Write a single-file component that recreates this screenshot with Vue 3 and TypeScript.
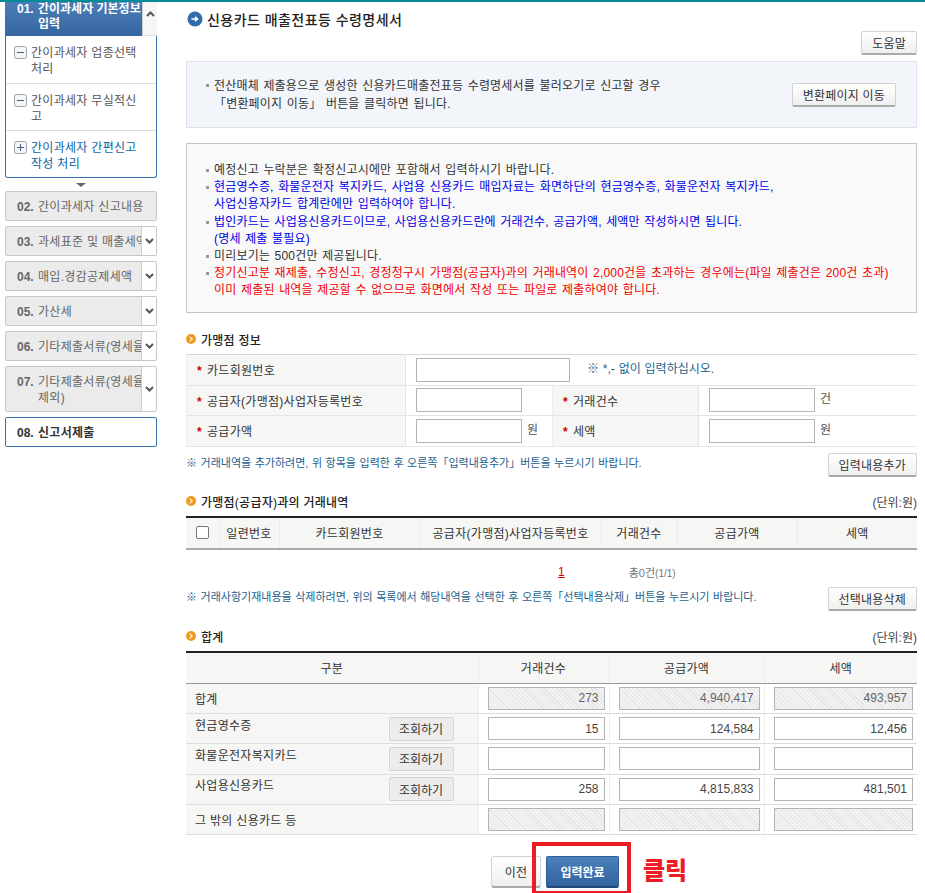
<script setup lang="ts">
interface Step {
  no: string
  lines: string[]
  caret: boolean
  tall?: boolean
}

interface SubItem {
  lines: string[]
  icon: 'minus' | 'plus'
  active?: boolean
}

interface TotalRow {
  label: string
  lookup: boolean
  locked: boolean
  values: string[]
}

const subItems: SubItem[] = [
  { lines: ['간이과세자 업종선택', '처리'], icon: 'minus' },
  { lines: ['간이과세자 무실적신', '고'], icon: 'minus' },
  { lines: ['간이과세자 간편신고', '작성 처리'], icon: 'plus', active: true },
]

const steps: Step[] = [
  { no: '02.', lines: ['간이과세자 신고내용'], caret: false },
  { no: '03.', lines: ['과세표준 및 매출세액'], caret: true },
  { no: '04.', lines: ['매입.경감공제세액'], caret: true },
  { no: '05.', lines: ['가산세'], caret: true },
  { no: '06.', lines: ['기타제출서류(영세율'], caret: true },
  { no: '07.', lines: ['기타제출서류(영세율', '제외)'], caret: true, tall: true },
]

const historyCols = ['일련번호', '카드회원번호', '공급자(가맹점)사업자등록번호', '거래건수', '공급가액', '세액']

const totalRows: TotalRow[] = [
  { label: '합계', lookup: false, locked: true, values: ['273', '4,940,417', '493,957'] },
  { label: '현금영수증', lookup: true, locked: false, values: ['15', '124,584', '12,456'] },
  { label: '화물운전자복지카드', lookup: true, locked: false, values: ['', '', ''] },
  { label: '사업용신용카드', lookup: true, locked: false, values: ['258', '4,815,833', '481,501'] },
  { label: '그 밖의 신용카드 등', lookup: false, locked: true, values: ['', '', ''] },
]
</script>

<template>
  <div class="page">
    <aside class="sidebar">
      <div class="step-open">
        <div class="step-open-head">
          <span class="step-no">01.</span>
          <span class="step-text">간이과세자 기본정보<br />입력</span>
          <span class="caret-btn up">
            <svg width="9" height="6" viewBox="0 0 9 6"><path d="M1 5l3.5-3.5L8 5" fill="none" stroke="#555" stroke-width="2" /></svg>
          </span>
        </div>
        <ul class="sub-list">
          <li v-for="item in subItems" :key="item.lines[0]" class="sub-item" :class="{ active: item.active }">
            <svg class="sub-icon" width="13" height="13" viewBox="0 0 13 13">
              <rect x="0.5" y="0.5" width="12" height="12" rx="2" fill="#f4f6f8" stroke="#9aa3ad" />
              <path d="M3 6.5h7" stroke="#44607c" stroke-width="1" />
              <path v-if="item.icon === 'plus'" d="M6.5 3v7" stroke="#44607c" stroke-width="1" />
            </svg>
            <span>{{ item.lines[0] }}<br />{{ item.lines[1] }}</span>
          </li>
        </ul>
      </div>
      <div class="down-arrow"></div>
      <div class="step-list">
        <div v-for="step in steps" :key="step.no" class="step" :class="{ tall: step.tall }">
          <div class="step-body">
            <span class="step-no">{{ step.no }}</span>
            <span class="step-text">
              <template v-for="(line, i) in step.lines" :key="i"><br v-if="i > 0" />{{ line }}</template>
            </span>
          </div>
          <span v-if="step.caret" class="caret-btn">
            <svg width="9" height="6" viewBox="0 0 9 6"><path d="M1 1l3.5 3.5L8 1" fill="none" stroke="#555" stroke-width="2" /></svg>
          </span>
        </div>
        <div class="step current">
          <div class="step-body">
            <span class="step-no">08.</span>
            <span class="step-text">신고서제출</span>
          </div>
        </div>
      </div>
    </aside>

    <main class="content">
      <h1 class="page-title">
        <svg width="16" height="16" viewBox="0 0 16 16">
          <circle cx="8" cy="8" r="7.5" fill="#2f6ea8" />
          <path d="M4.5 8h5M8 5.8L10.5 8 8 10.2" fill="none" stroke="#fff" stroke-width="1.6" />
        </svg>
        신용카드 매출전표등 수령명세서
      </h1>

      <div class="help-row"><button class="btn">도움말</button></div>

      <section class="convert-box">
        <p class="bullet">
          전산매체 제출용으로 생성한 신용카드매출전표등 수령명세서를 불러오기로 신고할 경우<br />
          「변환페이지 이동」 버튼을 클릭하면 됩니다.
        </p>
        <button class="btn">변환페이지 이동</button>
      </section>

      <section class="notice-box">
        <p class="bullet">예정신고 누락분은 확정신고시에만 포함해서 입력하시기 바랍니다.</p>
        <p class="bullet blue">
          현금영수증, 화물운전자 복지카드, 사업용 신용카드 매입자료는 화면하단의 현금영수증, 화물운전자 복지카드,<br />
          사업신용자카드 합계란에만 입력하여야 합니다.
        </p>
        <p class="bullet blue">
          법인카드는 사업용신용카드이므로, 사업용신용카드란에 거래건수, 공급가액, 세액만 작성하시면 됩니다.<br />
          (명세 제출 불필요)
        </p>
        <p class="bullet">미리보기는 500건만 제공됩니다.</p>
        <p class="bullet red">
          정기신고분 재제출, 수정신고, 경정청구시 가맹점(공급자)과의 거래내역이 2,000건을 초과하는 경우에는(파일 제출건은 200건 초과)<br />
          이미 제출된 내역을 제공할 수 없으므로 화면에서 작성 또는 파일로 제출하여야 합니다.
        </p>
      </section>

      <h2 class="section-title first">
        <span class="dot"></span>가맹점 정보
      </h2>
      <table class="form-table">
        <colgroup>
          <col style="width: 219px" /><col style="width: 147px" /><col style="width: 146px" /><col />
        </colgroup>
        <tbody>
          <tr>
            <th><i>*</i>카드회원번호</th>
            <td colspan="3">
              <input class="field card" type="text" />
              <span class="hint inline">※ *,- 없이 입력하십시오.</span>
            </td>
          </tr>
          <tr>
            <th><i>*</i>공급자(가맹점)사업자등록번호</th>
            <td><input class="field short" type="text" /></td>
            <th><i>*</i>거래건수</th>
            <td><input class="field short" type="text" /><span class="unit">건</span></td>
          </tr>
          <tr>
            <th><i>*</i>공급가액</th>
            <td><input class="field short" type="text" /><span class="unit">원</span></td>
            <th><i>*</i>세액</th>
            <td><input class="field short" type="text" /><span class="unit">원</span></td>
          </tr>
        </tbody>
      </table>
      <div class="note-row add">
        <span class="hint">※ 거래내역을 추가하려면, 위 항목을 입력한 후 오른쪽「입력내용추가」버튼을 누르시기 바랍니다.</span>
        <button class="btn">입력내용추가</button>
      </div>

      <div class="section-row history">
        <h2 class="section-title"><span class="dot"></span>가맹점(공급자)과의 거래내역</h2>
        <span class="unit-label">(단위:원)</span>
      </div>
      <table class="history-table">
        <colgroup>
          <col style="width: 33px" /><col style="width: 60px" /><col style="width: 141px" />
          <col style="width: 181px" /><col style="width: 76px" /><col style="width: 120px" /><col />
        </colgroup>
        <thead>
          <tr>
            <th><input class="check" type="checkbox" /></th>
            <th v-for="col in historyCols" :key="col">{{ col }}</th>
          </tr>
        </thead>
      </table>
      <div class="pager">
        <a class="page-link">1</a>
        <span class="page-total">총0건<small>(1/1)</small></span>
      </div>
      <div class="note-row remove">
        <span class="hint">※ 거래사항기재내용을 삭제하려면, 위의 목록에서 해당내역을 선택한 후 오른쪽「선택내용삭제」버튼을 누르시기 바랍니다.</span>
        <button class="btn">선택내용삭제</button>
      </div>

      <div class="section-row total">
        <h2 class="section-title"><span class="dot"></span>합계</h2>
        <span class="unit-label">(단위:원)</span>
      </div>
      <table class="total-table">
        <colgroup>
          <col style="width: 292px" /><col style="width: 131px" /><col style="width: 155px" /><col />
        </colgroup>
        <thead>
          <tr>
            <th>구분</th>
            <th>거래건수</th>
            <th>공급가액</th>
            <th>세액</th>
          </tr>
        </thead>
        <tbody>
          <tr v-for="row in totalRows" :key="row.label">
            <th>
              <div class="total-label" :class="{ top: row.lookup }">
                <span>{{ row.label }}</span>
                <button v-if="row.lookup" class="lookup">조회하기</button>
              </div>
            </th>
            <td v-for="(val, i) in row.values" :key="i">
              <input class="field amount" :class="{ locked: row.locked }" type="text" :value="val" :readonly="row.locked" />
            </td>
          </tr>
        </tbody>
      </table>

      <div class="actions">
        <button class="btn prev">이전</button>
        <div class="submit-wrap">
          <button class="submit">입력완료</button>
          <span class="red-frame"></span>
          <span class="click-label">클릭</span>
        </div>
      </div>
    </main>
  </div>
</template>

<style scoped>
.page {
  display: flex;
  width: 925px;
  height: 893px;
  overflow: hidden;
  border-top: 2px solid #008c95;
  box-sizing: border-box;
  font-family: "Liberation Sans", "Noto Sans CJK KR", sans-serif;
  font-size: 12px;
  color: #333;
  background: #fff;
}

button,
input {
  font-family: inherit;
}

.sidebar {
  width: 152px;
  margin-left: 5px;
  flex: none;
}

.step-open-head {
  position: relative;
  display: flex;
  height: 34px;
  padding: 0 0 0 12px;
  background: linear-gradient(#4a7db8, #36669f);
  color: #fff;
  font-weight: 700;
  font-size: 12px;
  line-height: 15px;
  overflow: hidden;
}

.step-open-head .step-no {
  width: 21px;
  flex: none;
}

.step-open-head .step-text {
  white-space: nowrap;
}

.caret-btn {
  position: absolute;
  top: 0;
  right: 0;
  bottom: 0;
  width: 14px;
  display: flex;
  align-items: center;
  justify-content: center;
  background: #fff;
  border-left: 1px solid #ccc;
}

.caret-btn.up {
  background: #f6f6f6;
  align-items: flex-start;
  padding-top: 9px;
  border-bottom: 1px solid #ddd;
  box-sizing: border-box;
  width: 15px;
}

.sub-list {
  list-style: none;
  margin: 0;
  padding: 0;
  border: 1px solid #3a72b0;
  border-top: 0;
  border-radius: 0 0 3px 3px;
  height: 142px;
  box-sizing: border-box;
}

.sub-item {
  display: flex;
  gap: 4px;
  height: 47.5px;
  box-sizing: border-box;
  padding: 9px 2px 0 8px;
  line-height: 16px;
  color: #555;
  font-size: 12px;
  letter-spacing: 0.3px;
  border-bottom: 1px solid #ddd;
}

.sub-item:last-child {
  border-bottom: 0;
}

.sub-item.active {
  color: #0b62a4;
}

.sub-icon {
  flex: none;
  margin-top: 1px;
}

.down-arrow {
  width: 0;
  height: 0;
  margin: 5px auto 4px;
  border-left: 5px solid transparent;
  border-right: 5px solid transparent;
  border-top: 4px solid #666;
}

.step-list {
  display: flex;
  flex-direction: column;
  gap: 5px;
}

.step {
  position: relative;
  height: 30px;
  box-sizing: border-box;
  background: #ebebeb;
  border: 1px solid #c8c8c8;
  border-radius: 2px;
  overflow: hidden;
}

.step.tall {
  height: 46px;
}

.step-body {
  display: flex;
  padding: 7px 0 0 11px;
  line-height: 16px;
  font-size: 12px;
  letter-spacing: 0.3px;
  color: #666;
  white-space: nowrap;
}

.step-no {
  width: 21px;
  flex: none;
  font-weight: 700;
  letter-spacing: 0;
}

.step.current {
  background: #fff;
  border-color: #3a72b0;
}

.step.current .step-body {
  color: #333;
  font-weight: 700;
}

.content {
  width: 731px;
  margin-left: 29px;
  flex: none;
}

.page-title {
  display: flex;
  align-items: center;
  gap: 4px;
  margin: 8px 0 0 1px;
  height: 18px;
  font-size: 14px;
  font-weight: 500;
  color: #222;
  letter-spacing: 0.45px;
}

.help-row {
  display: flex;
  justify-content: flex-end;
  margin-top: 3px;
}

.btn {
  height: 24px;
  padding: 0 10px;
  background: linear-gradient(#fff, #efefef);
  border: 1px solid #d2d2d2;
  border-bottom: 2px solid #aaa;
  border-radius: 2px;
  color: #333;
  font-size: 12px;
  letter-spacing: 0.2px;
  white-space: nowrap;
}

.convert-box {
  display: flex;
  align-items: center;
  justify-content: space-between;
  height: 67px;
  box-sizing: border-box;
  margin-top: 6px;
  padding: 0 20px 0 18px;
  background: #f2f5fa;
  border: 1px solid #dde3ec;
}

.bullet {
  position: relative;
  margin: 0;
  padding-left: 9px;
  line-height: 17.2px;
  font-size: 12px;
  letter-spacing: 0.18px;
  word-spacing: 1px;
}

.bullet::before {
  content: "";
  position: absolute;
  left: 1px;
  top: 7px;
  width: 3px;
  height: 3px;
  background: #999;
}

.convert-box .bullet {
  line-height: 18px;
}

.notice-box {
  height: 170px;
  box-sizing: border-box;
  margin-top: 15px;
  padding: 18px 0 0 18px;
  background: #f9f9f9;
  border: 1px solid #c4c4c4;
}

.blue {
  color: #0000e6;
}

.red {
  color: #f00000;
}

.section-title {
  display: flex;
  align-items: center;
  gap: 5px;
  margin: 0;
  font-size: 12px;
  letter-spacing: 0.25px;
  font-weight: 500;
  color: #222;
  line-height: 16px;
}

.section-title.first {
  margin-top: 20px;
}

.dot {
  position: relative;
  top: -2px;
  width: 10px;
  height: 10px;
  border-radius: 50%;
  background: #ef9a1c;
}

.dot::after {
  content: "";
  position: absolute;
  left: 2px;
  top: 3px;
  width: 3px;
  height: 3px;
  border-top: 1px solid #fff;
  border-right: 1px solid #fff;
  transform: rotate(45deg);
}

.form-table,
.history-table,
.total-table {
  width: 731px;
  table-layout: fixed;
  border-collapse: collapse;
}

.form-table {
  margin-top: 5px;
  border-top: 1px solid #d8d8d8;
  border-bottom: 1px solid #d8d8d8;
}

.form-table tr {
  height: 30.5px;
}

.form-table th,
.form-table td {
  padding: 0;
  border-bottom: 1px solid #e4e4e4;
  font-size: 12px;
  letter-spacing: 0.3px;
}

.form-table th {
  padding-left: 10px;
  text-align: left;
  font-weight: 400;
  background: #f6f6f4;
  border-left: 1px solid #eee;
  color: #333;
}

.form-table td {
  padding-left: 10px;
  border-left: 1px solid #e4e4e4;
}

.form-table i {
  margin-right: 5px;
  color: #c00;
  font-style: normal;
  font-weight: 700;
}

.field {
  height: 24px;
  box-sizing: border-box;
  border: 1px solid #b4b4b4;
  background: #fff;
  padding: 0 4px;
  vertical-align: middle;
  outline: none;
}

.field.card {
  width: 154px;
}

.field.short {
  width: 106px;
}

.unit {
  margin-left: 5px;
  color: #555;
  font-size: 12px;
}

.hint {
  color: #1b5f8e;
  font-size: 11px;
  word-spacing: 0.5px;
  letter-spacing: 0;
  white-space: nowrap;
}

.hint.inline {
  margin-left: 17px;
  font-size: 12px;
}

.note-row {
  display: flex;
  align-items: flex-start;
  justify-content: space-between;
}

.note-row .hint {
  padding-top: 1px;
}

.note-row.add {
  margin-top: 6px;
}

.section-row {
  display: flex;
  justify-content: space-between;
  align-items: center;
}

.section-row.history {
  margin-top: 18px;
}

.section-row.total {
  margin-top: 19px;
}

.unit-label {
  font-size: 12px;
  line-height: 16px;
  color: #444;
}

.history-table {
  margin-top: 5px;
  border-top: 2px solid #222;
  border-bottom: 2px solid #aaa;
}

.history-table th {
  height: 30px;
  padding: 0;
  background: #f6f6f4;
  border-left: 1px solid #ececea;
  font-size: 12px;
  letter-spacing: 0.3px;
  font-weight: 400;
  color: #333;
}

.history-table th:first-child {
  border-left: 0;
}

.check {
  appearance: none;
  display: block;
  width: 13px;
  height: 13px;
  margin: 0 0 0 10px;
  background: #fff;
  border: 1px solid #777;
  border-radius: 2px;
}

.pager {
  display: flex;
  height: 16px;
  margin-top: 14px;
  padding-left: 372px;
  align-items: center;
}

.page-link {
  color: #d40000;
  text-decoration: underline;
  font-size: 12px;
}

.page-total {
  margin-left: 64px;
  color: #777;
  font-size: 11px;
}

.page-total small {
  font-size: 10px;
}

.note-row.remove {
  margin-top: 7px;
}

.total-table {
  margin-top: 5px;
  border-top: 2px solid #222;
}

.total-table thead th {
  height: 30px;
  padding: 0;
  background: #f6f6f4;
  border-left: 1px solid #ececea;
  border-bottom: 1px solid #999;
  font-weight: 400;
  font-size: 12px;
  letter-spacing: 0.3px;
  color: #333;
}

.total-table thead th:first-child {
  border-left: 0;
}

.total-table tbody tr {
  height: 30.4px;
}

.total-table tbody th {
  padding: 0 24px 0 9px;
  background: #f6f6f4;
  border-bottom: 1px solid #ddd;
  text-align: left;
  font-weight: 400;
  font-size: 12px;
  letter-spacing: 0.3px;
  color: #333;
}

.total-table tbody td {
  padding: 0 4px 0 9px;
  border-left: 1px solid #eee;
  border-bottom: 1px solid #ddd;
}

.total-label {
  display: flex;
  align-items: center;
  justify-content: space-between;
}

.total-label.top span {
  align-self: flex-start;
  margin-top: -1px;
}

.lookup {
  width: 65px;
  height: 24px;
  padding: 0;
  background: #ececec;
  border: 1px solid #d4d4d4;
  border-radius: 2px;
  font-size: 12px;
  color: #333;
}

.field.amount {
  width: 100%;
  height: 23px;
  text-align: right;
  font-size: 12px;
  color: #444;
  padding-right: 5px;
}

.field.locked {
  background: repeating-linear-gradient(45deg, #f3f3f3, #f3f3f3 2px, #e4e4e4 2px, #e4e4e4 3px);
  color: #666;
}

.actions {
  display: flex;
  gap: 5px;
  margin: 21px 0 0 305px;
}

.btn.prev {
  width: 50px;
  height: 32px;
  padding: 0;
  border-radius: 3px;
}

.submit-wrap {
  position: relative;
}

.submit {
  width: 73px;
  height: 32px;
  padding: 0;
  background: linear-gradient(#4b80bb, #33659f);
  border: 1px solid #2f5f97;
  border-bottom: 2px solid #234a78;
  border-radius: 2px;
  color: #fff;
  font-size: 12px;
  font-weight: 700;
}

.red-frame {
  position: absolute;
  left: -14px;
  top: -14px;
  width: 99px;
  height: 53px;
  box-sizing: border-box;
  border: 4px solid #ee1c25;
}

.click-label {
  position: absolute;
  left: 97px;
  top: 0;
  color: #ee1c25;
  font-size: 24px;
  font-weight: 900;
  line-height: 30px;
  white-space: nowrap;
}
</style>

<style>
html,
body {
  margin: 0;
  overflow: hidden;
  background: #fff;
}
</style>
